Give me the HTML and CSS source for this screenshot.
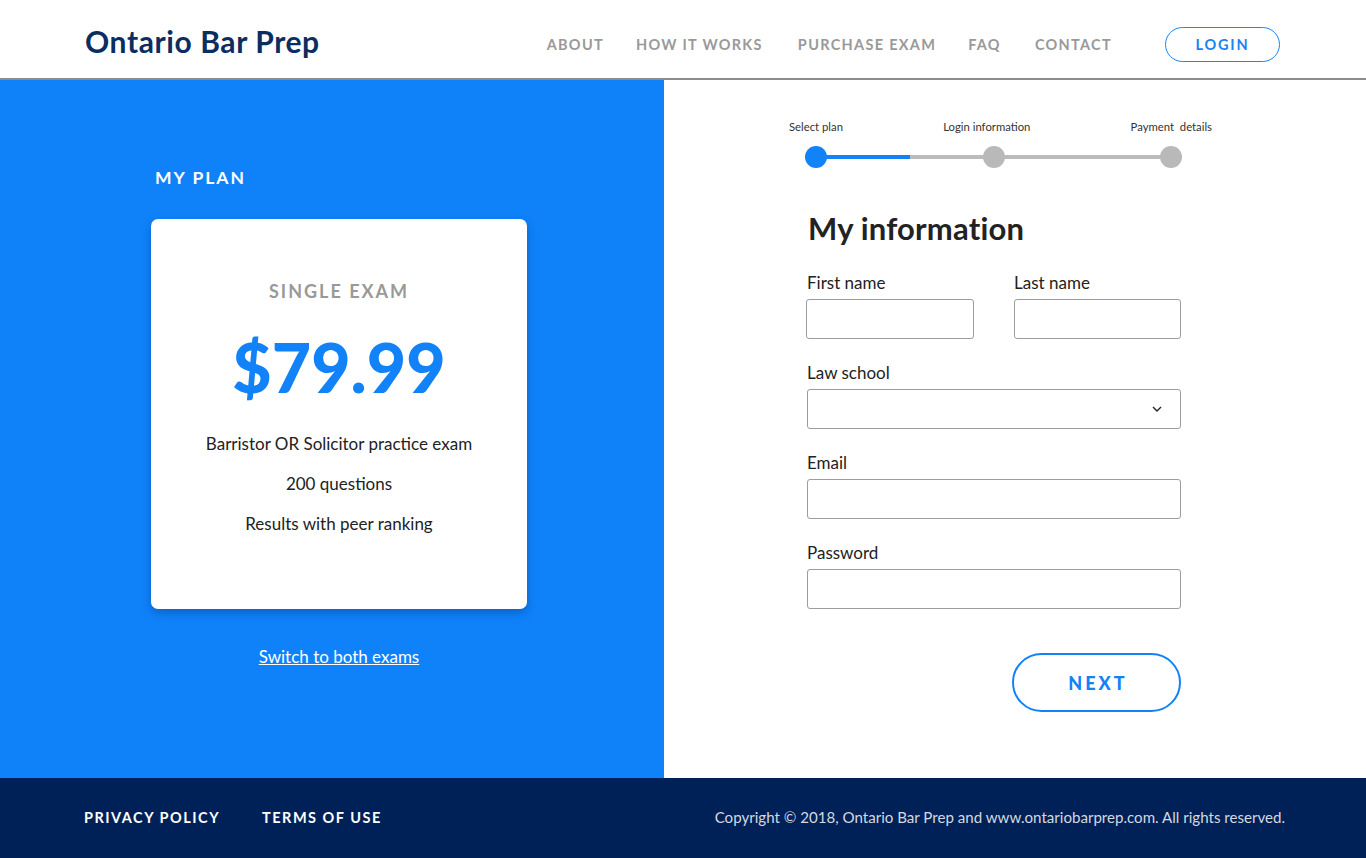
FILE: index.html
```html
<!DOCTYPE html>
<html lang="en">
<head>
<meta charset="utf-8">
<title>Ontario Bar Prep</title>
<link rel="stylesheet" href="styles.css">
</head>
<body>
<header class="header">
  <div class="logo">Ontario Bar Prep</div>
  <nav class="nav">
    <a class="nav-link">ABOUT</a>
    <a class="nav-link">HOW IT WORKS</a>
    <a class="nav-link">PURCHASE EXAM</a>
    <a class="nav-link">FAQ</a>
    <a class="nav-link">CONTACT</a>
    <a class="login-btn">LOGIN</a>
  </nav>
</header>
<main class="main">
  <section class="plan-side">
    <div class="plan-inner">
      <h2 class="plan-title">MY PLAN</h2>
      <div class="plan-card">
        <div class="plan-name">SINGLE EXAM</div>
        <div class="plan-price">$79.99</div>
        <ul class="plan-features">
          <li>Barristor OR Solicitor practice exam</li>
          <li>200 questions</li>
          <li>Results with peer ranking</li>
        </ul>
      </div>
      <a class="switch-link">Switch to both exams</a>
    </div>
  </section>
  <section class="form-side">
    <div class="form-inner">
      <div class="stepper">
        <div class="step-labels">
          <span>Select plan</span>
          <span>Login information</span>
          <span>Payment&nbsp; details</span>
        </div>
        <div class="step-track">
          <div class="track-fill"></div>
          <span class="dot dot-active"></span>
          <span class="dot"></span>
          <span class="dot"></span>
        </div>
      </div>
      <h1 class="form-title">My information</h1>
      <div class="row">
        <label class="field">
          <span class="label">First name</span>
          <span class="input"></span>
        </label>
        <label class="field">
          <span class="label">Last name</span>
          <span class="input"></span>
        </label>
      </div>
      <label class="field">
        <span class="label">Law school</span>
        <span class="input select">
          <svg width="10" height="6" viewBox="0 0 10 6"><path d="M1 1l4 4 4-4" fill="none" stroke="#222" stroke-width="1.4"/></svg>
        </span>
      </label>
      <label class="field">
        <span class="label">Email</span>
        <span class="input"></span>
      </label>
      <label class="field">
        <span class="label">Password</span>
        <span class="input"></span>
      </label>
      <div class="actions">
        <a class="next-btn">NEXT</a>
      </div>
    </div>
  </section>
</main>
<footer class="footer">
  <div class="footer-links">
    <a>PRIVACY POLICY</a>
    <a>TERMS OF USE</a>
  </div>
  <div class="copyright">Copyright © 2018, Ontario Bar Prep and www.ontariobarprep.com. All rights reserved.</div>
</footer>
</body>
</html>
```
FILE: styles.css
```css
* { box-sizing: border-box; }
html, body { margin: 0; padding: 0; }
body {
  font-family: "Lato", "Open Sans", sans-serif;
  color: #222;
  width: 1366px;
  height: 858px;
  overflow: hidden;
  display: flex;
  flex-direction: column;
}
a { text-decoration: none; cursor: pointer; }

.header {
  height: 80px;
  border-bottom: 2px solid #8c8c8c;
  display: flex;
  align-items: center;
  justify-content: space-between;
  padding: 0 86px 0 85px;
  flex-shrink: 0;
}
.logo {
  font-size: 30px;
  font-weight: 700;
  color: #0b2d5f;
  letter-spacing: 0.6px;
  margin-top: 3px;
}
.nav {
  display: flex;
  align-items: center;
  margin-top: 10px;
}
.nav-link {
  font-size: 14.5px;
  font-weight: 700;
  color: #999;
  letter-spacing: 1.3px;
  margin-right: 32px;
}
.nav-link:nth-child(2) { margin-right: 35px; }
.nav-link:nth-child(4) { margin-right: 34px; }
.nav-link:nth-child(5) { margin-right: 53px; }
.login-btn {
  width: 115px;
  height: 35px;
  border: 1px solid #1a86f7;
  border-radius: 18px;
  display: flex;
  align-items: center;
  justify-content: center;
  color: #1783f6;
  font-size: 14.5px;
  font-weight: 700;
  letter-spacing: 1.8px;
}

.main {
  display: flex;
  height: 698px;
  flex-shrink: 0;
}
.plan-side {
  width: 664px;
  background: #0f82fa;
  padding: 88px 0 0 151px;
}
.plan-inner {
  width: 376px;
  display: flex;
  flex-direction: column;
  align-items: center;
}
.plan-title {
  align-self: flex-start;
  margin: -1px 0 31px 4px;
  color: #fff;
  font-size: 17.5px;
  font-weight: 700;
  letter-spacing: 2px;
}
.plan-card {
  width: 376px;
  height: 390px;
  background: #fff;
  border-radius: 7px;
  box-shadow: 0 4px 10px rgba(0, 30, 80, 0.3);
  display: flex;
  flex-direction: column;
  align-items: center;
  padding-top: 61px;
}
.plan-name {
  color: #999;
  font-size: 18px;
  font-weight: 700;
  letter-spacing: 2px;
}
.plan-price {
  color: #1182f8;
  font-size: 68px;
  font-weight: 900;
  margin-top: 31px;
  line-height: 1;
}
.plan-features {
  list-style: none;
  margin: 23px 0 0;
  padding: 0;
  text-align: center;
  font-size: 17px;
  color: #222;
}
.plan-features li { height: 40px; line-height: 40px; }
.switch-link {
  color: #fff;
  text-decoration: underline;
  font-size: 17px;
  margin-top: 37px;
}

.form-side {
  flex: 1;
  background: #fff;
  padding: 40px 0 0 142px;
}
.form-inner {
  width: 375px;
  display: flex;
  flex-direction: column;
}
.stepper {
  width: 424px;
  margin-left: -18px;
}
.step-labels {
  display: flex;
  justify-content: space-between;
  font-size: 11.3px;
  color: #333;
  padding-left: 1px;
}
.step-track {
  position: relative;
  margin: 13px 0 0 17px;
  width: 377px;
  height: 22px;
  display: flex;
  justify-content: space-between;
  align-items: center;
}
.step-track::before {
  content: "";
  position: absolute;
  left: 11px;
  right: 11px;
  top: 9px;
  height: 4px;
  background: #bbb;
}
.track-fill {
  position: absolute;
  left: 11px;
  width: 94px;
  top: 9px;
  height: 4px;
  background: #1182f8;
}
.dot {
  width: 22px;
  height: 22px;
  border-radius: 50%;
  background: #b9b9b9;
  position: relative;
  z-index: 1;
}
.dot-active { background: #1182f8; }

.form-title {
  font-size: 31px;
  font-weight: 700;
  color: #222;
  margin: 41px 0 0 2px;
  letter-spacing: 0.2px;
}
.row {
  display: flex;
  justify-content: space-between;
}
.row .field { width: 168px; }
.field {
  display: flex;
  flex-direction: column;
  margin-top: 23px;
}
.row .field { margin-top: 25px; }
.label {
  font-size: 17px;
  color: #222;
  line-height: 22px;
  margin-left: 1px;
}
.input {
  height: 40px;
  margin-top: 5px;
  border: 1px solid #9c9c9c;
  border-radius: 3px;
  background: #fff;
}
.row + .field .input,
.field + .field .input { margin-left: 1px; }
.select {
  display: flex;
  align-items: center;
  justify-content: flex-end;
  padding-right: 18px;
}
.actions {
  display: flex;
  justify-content: flex-end;
  margin-top: 44px;
}
.next-btn {
  width: 169px;
  height: 59px;
  border: 2px solid #1182f8;
  border-radius: 30px;
  display: flex;
  align-items: center;
  justify-content: center;
  color: #1182f8;
  font-size: 18px;
  font-weight: 900;
  letter-spacing: 3px;
  padding-left: 3px;
}

.footer {
  flex: 1;
  background: #002157;
  display: flex;
  align-items: center;
  justify-content: space-between;
  padding: 0 81px 2px 84px;
}
.footer-links { display: flex; gap: 42px; }
.footer-links a {
  color: #fff;
  font-size: 14.5px;
  font-weight: 700;
  letter-spacing: 1.5px;
}
.copyright {
  color: #d4d8e0;
  font-size: 15.1px;
}
```
